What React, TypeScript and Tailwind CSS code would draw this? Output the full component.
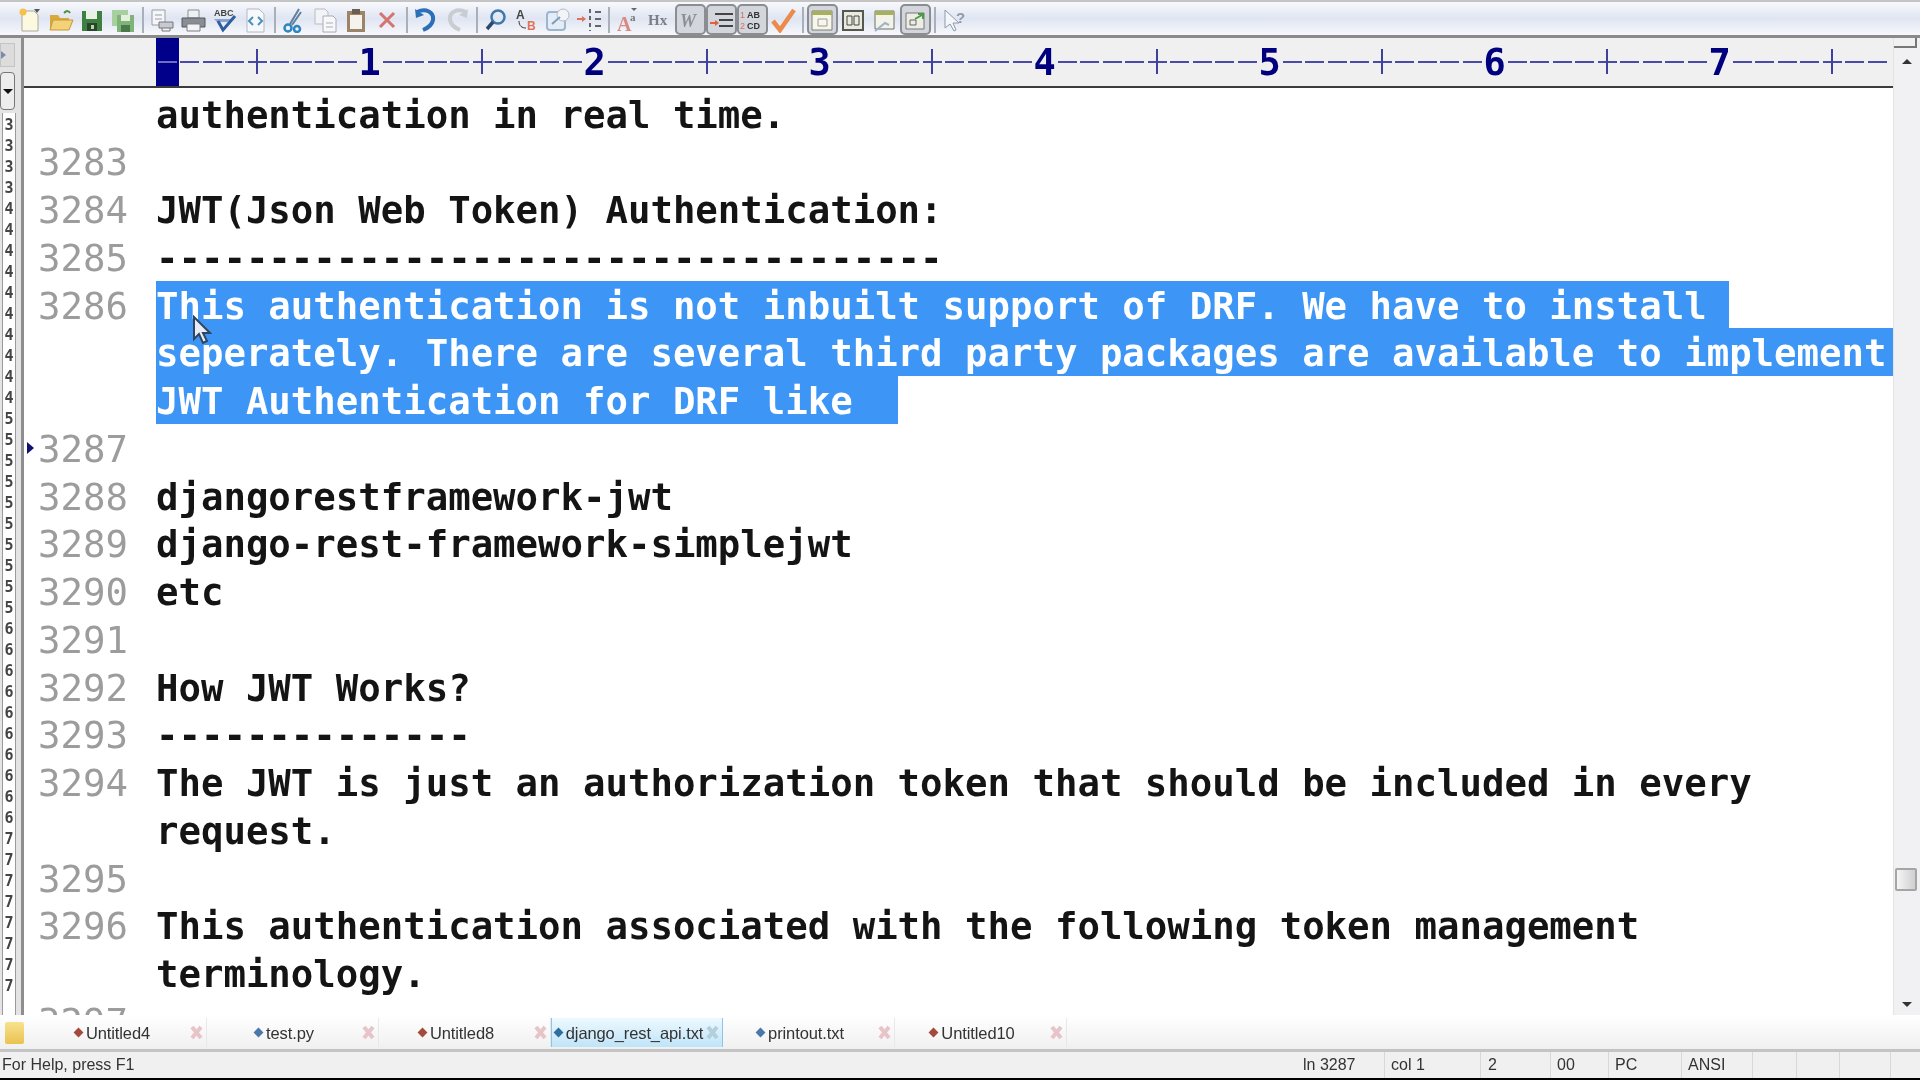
import type { ReactNode } from "react";

const Svg = ({ children }: { children: ReactNode }) => (
  <svg width="26" height="26" viewBox="0 0 26 26" fill="none">
    {children}
  </svg>
);

const icons: Record<string, ReactNode> = {
  new: (
    <Svg>
      <path d="M5 4h12l4 4v16H5z" fill="#fdf8e0" stroke="#a9a9a0" />
      <circle cx="6" cy="5" r="3.5" fill="#f6c04a" />
      <path d="M17 2h6l-3 4z" fill="#555" />
    </Svg>
  ),
  open: (
    <Svg>
      <path d="M2 8h8l2 3h9v12H2z" fill="#d9a93c" />
      <path d="M5 13h20l-4 10H2z" fill="#f3d27a" stroke="#c39a36" />
      <path d="M16 6c3-3 5-2 6 0" stroke="#4f8f3a" strokeWidth="2" />
    </Svg>
  ),
  save: (
    <Svg>
      <path d="M3 4h20v20H3z" fill="#3f8040" />
      <path d="M7 4h11v8H7z" fill="#e9f0e4" />
      <path d="M8 16h10v8H8z" fill="#26452a" />
      <path d="M12 18h3v4h-3z" fill="#b9d4a9" />
    </Svg>
  ),
  saveAll: (
    <Svg>
      <path d="M2 3h16v16H2z" fill="#a8cfa0" />
      <path d="M7 8h17v17H7z" fill="#7fb377" />
      <path d="M11 8h9v6h-9z" fill="#e3f0dd" />
      <path d="M11 18h9v7h-9z" fill="#4a7a4c" />
    </Svg>
  ),
  preview: (
    <Svg>
      <path d="M3 3h13v15H3z" fill="#f4f6fa" stroke="#9a9da6" />
      <path d="M6 8h7M6 12h7" stroke="#9a9da6" />
      <path d="M10 15h14v6H10z" fill="#c7cad2" stroke="#777" />
      <path d="M13 21v3h8v-3" stroke="#777" />
    </Svg>
  ),
  print: (
    <Svg>
      <path d="M8 3h11v8H8z" fill="#eef0f4" stroke="#8c8f96" />
      <path d="M2 11h23v9H2z" fill="#8a8d94" stroke="#55585e" />
      <path d="M7 17h13v7H7z" fill="#f3f4f6" stroke="#7b7e85" />
    </Svg>
  ),
  spell: (
    <Svg>
      <text x="3" y="9" fontSize="9" fontWeight="700" fontFamily="Liberation Sans, sans-serif" fill="#444">
        ABC
      </text>
      <path d="M3 12h20l-4 3H6z" fill="#88a5cf" />
      <path d="M7 14l5 9L24 9" stroke="#2f5f9e" strokeWidth="3" />
    </Svg>
  ),
  code: (
    <Svg>
      <path d="M5 2h12l5 5v18H5z" fill="#f6f8fb" stroke="#b3b8c2" />
      <path d="M11 10l-4 4 4 4M16 10l4 4-4 4" stroke="#4a90c2" strokeWidth="2" />
    </Svg>
  ),
  cut: (
    <Svg>
      <path d="M18 2L9 17M20 5L11 18" stroke="#5f7f9e" strokeWidth="2" />
      <circle cx="7" cy="21" r="3.5" stroke="#2e86c1" strokeWidth="2.5" />
      <circle cx="16" cy="22" r="3" stroke="#2e86c1" strokeWidth="2.5" />
    </Svg>
  ),
  copy: (
    <Svg>
      <path d="M3 2h10l3 3v12H3z" fill="#f2f3f6" stroke="#b9bcc4" />
      <path d="M11 9h10l3 3v13H11z" fill="#f7f8fa" stroke="#a9acb5" />
      <path d="M14 16h7M14 20h7" stroke="#a9acb5" />
    </Svg>
  ),
  paste: (
    <Svg>
      <path d="M4 4h18v21H4z" fill="#9b8468" />
      <path d="M7 8h12v14H7z" fill="#f5f3ee" />
      <path d="M9 2h8v5H9z" fill="#6b5f52" />
    </Svg>
  ),
  del: (
    <Svg>
      <path d="M6 6l14 14M20 6L6 20" stroke="#d5736f" strokeWidth="3" />
    </Svg>
  ),
  undo: (
    <Svg>
      <path d="M4 5c9-4 17 0 16 8-1 5-5 8-10 10" stroke="#2a6fb8" strokeWidth="4" />
      <path d="M2 2l1 9 8-3z" fill="#2a6fb8" />
    </Svg>
  ),
  redo: (
    <Svg>
      <path d="M22 5c-9-4-17 0-16 8 1 5 5 8 10 10" stroke="#c9ccd0" strokeWidth="4" />
      <path d="M24 2l-1 9-8-3z" fill="#c9ccd0" />
    </Svg>
  ),
  find: (
    <Svg>
      <circle cx="15" cy="10" r="6.5" stroke="#3f78ad" strokeWidth="2.5" />
      <path d="M10 15l-6 7" stroke="#2c4a68" strokeWidth="3.5" />
    </Svg>
  ),
  replace: (
    <Svg>
      <text x="2" y="12" fontSize="12" fontWeight="700" fontFamily="Liberation Sans, sans-serif" fill="#444">
        A
      </text>
      <text x="13" y="23" fontSize="12" fontWeight="700" fontFamily="Liberation Sans, sans-serif" fill="#e0705a">
        B
      </text>
      <path d="M5 14c0 5 3 7 7 7" stroke="#333" />
    </Svg>
  ),
  goTo: (
    <Svg>
      <rect x="2" y="5" width="18" height="18" rx="3" fill="#e4edf6" stroke="#9db6cf" strokeWidth="2" />
      <circle cx="18" cy="8" r="6" fill="#f2f4f7" stroke="#b4bcc6" />
      <path d="M7 17l8-7" stroke="#7b9cbd" strokeWidth="2" />
    </Svg>
  ),
  indentList: (
    <Svg>
      <path d="M1 12h7" stroke="#e0705a" strokeWidth="2" />
      <path d="M6 9l4 3-4 3z" fill="#e0705a" />
      <path d="M14 2v22" stroke="#666" strokeWidth="2" strokeDasharray="4 3" />
      <path d="M19 5h6M19 12h6M19 19h6" stroke="#666" strokeWidth="2" />
    </Svg>
  ),
  font: (
    <Svg>
      <text x="2" y="24" fontSize="20" fontWeight="700" fontFamily="Liberation Serif, serif" fill="#d98a82">
        A
      </text>
      <text x="15" y="14" fontSize="11" fontWeight="700" fontFamily="Liberation Serif, serif" fill="#777">
        a
      </text>
      <path d="M16 1h6l-3 3z" fill="#666" />
    </Svg>
  ),
  hx: (
    <Svg>
      <text x="2" y="18" fontSize="15" fontWeight="700" fontFamily="Liberation Serif, serif" fill="#7a7f88">
        Hx
      </text>
    </Svg>
  ),
  wrap: (
    <Svg>
      <text x="3" y="20" fontSize="18" fontStyle="italic" fontWeight="700" fontFamily="Liberation Serif, serif" fill="#8b8f96">
        W
      </text>
    </Svg>
  ),
  indent: (
    <Svg>
      <path d="M7 7h18M11 13h14M11 19h14" stroke="#444" strokeWidth="2" />
      <path d="M2 16h6" stroke="#e0603f" strokeWidth="2" />
      <path d="M7 13l4 3-4 3z" fill="#e0603f" />
    </Svg>
  ),
  numbers: (
    <Svg>
      <text x="1" y="11" fontSize="9" fontFamily="Liberation Sans, sans-serif" fill="#d9705a">
        1
      </text>
      <text x="1" y="22" fontSize="9" fontFamily="Liberation Sans, sans-serif" fill="#d9705a">
        2
      </text>
      <text x="8" y="11" fontSize="9" fontWeight="700" fontFamily="Liberation Sans, sans-serif" fill="#333">
        AB
      </text>
      <text x="8" y="22" fontSize="9" fontWeight="700" fontFamily="Liberation Sans, sans-serif" fill="#333">
        CD
      </text>
    </Svg>
  ),
  check: (
    <Svg>
      <path d="M3 14l7 9L24 3" stroke="#ea8a4c" strokeWidth="4.5" />
    </Svg>
  ),
  panelA: (
    <Svg>
      <path d="M3 4h20v19H3z" fill="#f7f6ea" stroke="#7d7f78" />
      <path d="M3 4h20v4H3z" fill="#a8b05c" />
      <path d="M9 12h9v7H9z" stroke="#9a9a9a" />
    </Svg>
  ),
  panelB: (
    <Svg>
      <path d="M3 4h20v19H3z" fill="#e9eadf" stroke="#56584f" strokeWidth="2" />
      <path d="M7 9h5v9H7zM14 9h5v9h-5z" stroke="#444" />
    </Svg>
  ),
  panelC: (
    <Svg>
      <path d="M4 4h19v18H4z" fill="#f3f3ea" stroke="#6f7168" />
      <path d="M4 4h19v4H4z" fill="#a8b05c" />
      <path d="M4 24l10-8 4 2" stroke="#9fb2c7" strokeWidth="2" />
    </Svg>
  ),
  panelD: (
    <Svg>
      <path d="M4 6h18v16H4z" fill="#eceee6" stroke="#777" />
      <path d="M8 18h6v-5H8z" stroke="#666" />
      <path d="M13 12l7-4M16 7h5v5" stroke="#4d9a45" strokeWidth="2" />
    </Svg>
  ),
  help: (
    <Svg>
      <path d="M4 3v18l5-4 4 7 2-1-3-7h6z" fill="#f4f6fa" stroke="#8e9aab" />
      <text x="15" y="16" fontSize="15" fontWeight="700" fontFamily="Liberation Sans, sans-serif" fill="#8e9aab">
        ?
      </text>
    </Svg>
  ),
};

const toolbar = [
  ["new", "open", "save", "saveAll"],
  ["preview", "print", "spell", "code"],
  ["cut", "copy", "paste", "del"],
  ["undo", "redo"],
  ["find", "replace", "goTo", "indentList"],
  ["font", "hx", "wrap", "indent", "numbers", "check"],
  ["panelA", "panelB", "panelC", "panelD"],
  ["help"],
];
const pressed = ["wrap", "indent", "numbers", "panelA", "panelD"];

function Toolbar() {
  return (
    <div className="h-[38px] pt-[2px] shrink-0 flex items-center bg-gradient-to-b from-[#f8f9fc] via-[#dfe5f2] to-[#f7f8fb] border-t-2 border-b-[3px] border-t-[#c4c4c4] border-b-[#8a8a8a] pl-[14.5px]">
      {toolbar.map((group, i) => (
        <div key={i} className="flex items-center">
          {i > 0 && (
            <div className="w-[8px] flex justify-center">
              <div className="w-[2px] h-[26px] bg-[#aab0ba]" />
            </div>
          )}
          {group.map((name) => (
            <div
              key={name}
              className={`w-[31px] h-[31px] flex items-center justify-center rounded-[5px] ${
                pressed.includes(name) ? "border-2 border-[#8a8d92] bg-[#d3d6dc]" : ""
              }`}
            >
              {icons[name]}
            </div>
          ))}
        </div>
      ))}
    </div>
  );
}

const rulerCells = Array.from({ length: 77 }, (_, i) => i);

function Ruler() {
  return (
    <div className="h-[50px] shrink-0 flex bg-[#f0f0f0] border-b-[2px] border-[#3c3c3c] pl-[132px] font-['DejaVu_Sans_Mono',monospace]">
      {rulerCells.map((i) => {
        const digit = i % 10 === 9;
        const tick = i % 10 === 4;
        return (
          <div
            key={i}
            className={`relative w-[22.5px] h-full shrink-0 flex items-center justify-center ${
              i === 0 ? "bg-[#00008b]" : ""
            }`}
          >
            {digit ? (
              <span className="mt-[2px] text-[37px] leading-[44px] font-bold text-[#00007f]">{(i + 1) / 10}</span>
            ) : (
              <div className={`h-[2px] w-[19px] ${i === 0 ? "bg-[#6f6fc0]" : "bg-[#4a4aa8]"}`} />
            )}
            {tick && <div className="absolute left-[10px] top-[11px] w-[2px] h-[25px] bg-[#3f3f9c]" />}
          </div>
        );
      })}
    </div>
  );
}

type Row = { n?: number; text?: string; sel?: boolean; mark?: boolean };

const rows: Row[] = [
  { text: "authentication in real time." },
  { n: 3283 },
  { n: 3284, text: "JWT(Json Web Token) Authentication:" },
  { n: 3285, text: "-----------------------------------" },
  { n: 3286, text: "This authentication is not inbuilt support of DRF. We have to install ", sel: true },
  { text: "seperately. There are several third party packages are available to implement ", sel: true },
  { text: "JWT Authentication for DRF like  ", sel: true },
  { n: 3287, mark: true },
  { n: 3288, text: "djangorestframework-jwt" },
  { n: 3289, text: "django-rest-framework-simplejwt" },
  { n: 3290, text: "etc" },
  { n: 3291 },
  { n: 3292, text: "How JWT Works?" },
  { n: 3293, text: "--------------" },
  { n: 3294, text: "The JWT is just an authorization token that should be included in every" },
  { text: "request." },
  { n: 3295 },
  { n: 3296, text: "This authentication associated with the following token management" },
  { text: "terminology." },
  { n: 3297 },
];

function Editor() {
  return (
    <div className="relative flex-1 min-h-0 min-w-0 overflow-hidden pt-[1.5px] bg-white font-['DejaVu_Sans_Mono',monospace] font-bold text-[37.35px] text-[#141414]">
      {rows.map((r, i) => (
        <div key={i} className="flex h-[47.76px] leading-[51.76px] whitespace-pre">
          <div className="w-[14px] shrink-0 flex items-center">
            {r.mark && (
              <div className="ml-[3px] w-0 h-0 border-y-[6px] border-y-transparent border-l-[7px] border-l-[#10106e]" />
            )}
          </div>
          <div className="w-[90px] shrink-0 text-right font-normal text-[#9c9c9c]">{r.n}</div>
          <div className="w-[28px] shrink-0" />
          {r.text && (
            <span className={r.sel ? "bg-[#3d96f5] text-white" : ""}>{r.text}</span>
          )}
        </div>
      ))}
      {/* mouse pointer over the selection */}
      <svg className="absolute left-[168px] top-[227px]" width="20" height="30" viewBox="0 0 20 30">
        <path d="M2 2v22l5-5 4 9 4-2-4-8h7z" fill="#e8edf4" stroke="#2f4660" strokeWidth="2" />
      </svg>
    </div>
  );
}

const bumps = [
  ..."3333",
  ..."4444444444",
  ..."5555555555",
  ..."6666666666",
  ..."77777777",
];

function LeftStrip() {
  return (
    <div className="w-[24px] shrink-0 flex flex-col bg-[#e4e4e4] border-r-[3px] border-[#8e8e8e] overflow-hidden">
      <div className="mt-[5px] h-[24px] w-[15px] shrink-0 bg-[#dcdcdc] border border-[#c4c4c4] flex items-center">
        <div className="w-0 h-0 border-y-[4px] border-y-transparent border-l-[5px] border-l-[#7a8aa8]" />
      </div>
      <div className="mt-[5px] h-[38px] w-[15px] shrink-0 bg-[#ededed] border border-[#777] rounded-[4px] flex items-center justify-center">
        <div className="w-0 h-0 border-x-[5px] border-x-transparent border-t-[5px] border-t-[#111]" />
      </div>
      <div className="mt-[3px] ml-[2px] w-[14px] flex-1 pt-[1.5px] border-x border-[#9a9a9a] bg-white font-['DejaVu_Sans_Mono',monospace] text-[15px] font-bold text-[#444] text-center">
        {bumps.map((b, i) => (
          <div key={i} className="h-[21px] leading-[21px]">
            {b}
          </div>
        ))}
      </div>
    </div>
  );
}

function Scrollbar() {
  return (
    <div className="w-[27px] shrink-0 flex flex-col items-center bg-[#f1f1f3] border-l border-[#e4e4e4]">
      <div className="h-[10px] w-[23px] mr-[3px] border-b-2 border-r-2 border-[#777]" />
      <div className="mt-[11px] w-0 h-0 border-x-[5px] border-x-transparent border-b-[5px] border-b-[#333]" />
      <div className="mt-[804px] h-[23px] w-[22px] -ml-[3px] rounded-[2px] bg-gradient-to-r from-[#f5f5f5] to-[#cfcfcf] border-2 border-[#a5a5a5]" />
      <div className="mt-[111px] w-0 h-0 border-x-[5px] border-x-transparent border-t-[5px] border-t-[#333]" />
    </div>
  );
}

const tabs = [
  { name: "Untitled4", dot: "bg-[#a34a3c]" },
  { name: "test.py", dot: "bg-[#4a78a8]" },
  { name: "Untitled8", dot: "bg-[#a34a3c]" },
  { name: "django_rest_api.txt", dot: "bg-[#2f6f9f]", active: true },
  { name: "printout.txt", dot: "bg-[#4a78a8]" },
  { name: "Untitled10", dot: "bg-[#a34a3c]" },
];

function TabBar() {
  return (
    <div className="h-[37px] shrink-0 flex pt-[3px] pb-[2px] bg-gradient-to-b from-white to-[#f0f0f0] border-b-[3px] border-[#c4c4c4] font-['Liberation_Sans',sans-serif] text-[16.5px] text-[#333]">
      <div className="w-[35px] shrink-0 flex items-center pl-[5px]">
        <div className="w-[19px] h-[22px] rounded-[2px] bg-gradient-to-b from-[#f8e28e] to-[#eac24e]" />
      </div>
      {tabs.map((t) => (
        <div
          key={t.name}
          className={`w-[172px] shrink-0 flex items-center pr-[2px] ${
            t.active
              ? "bg-gradient-to-b from-[#eef9ff] to-[#bfe4f8] border-x border-[#8fc5e4]"
              : "border-r border-[#e8e8e8]"
          }`}
        >
          <div className="flex-1 flex items-center justify-center gap-[4px] min-w-0">
            <div className={`w-[7px] h-[7px] shrink-0 rotate-45 ${t.dot}`} />
            <span className="mt-[1px] tracking-[-0.1px] whitespace-nowrap">{t.name}</span>
          </div>
          <svg className="shrink-0 mr-[1px]" width="13" height="15" viewBox="0 0 13 15">
            <path d="M2 2l9 11M11 2L2 13" stroke={t.active ? "#b4cfdc" : "#e6c4c8"} strokeWidth="4" />
          </svg>
        </div>
      ))}
    </div>
  );
}

const panes = [
  { text: "ln 3287", w: "w-[96px]" },
  { text: "col 1", w: "w-[96px]" },
  { text: "2", w: "w-[70px]" },
  { text: "00", w: "w-[58px]" },
  { text: "PC", w: "w-[73px]" },
  { text: "ANSI", w: "w-[71px]" },
  { text: "", w: "w-[44px]" },
  { text: "", w: "w-[43px]" },
  { text: "", w: "w-[51px]" },
];

function StatusBar() {
  return (
    <div className="h-[26px] shrink-0 flex items-center bg-[#f0f0f0] font-['Liberation_Sans',sans-serif] text-[16px] text-[#333]">
      <div className="w-[1289px] shrink-0 pl-[2px]">For Help, press F1</div>
      {panes.map((p, i) => (
        <div key={i} className={`${p.w} h-full shrink-0 pl-[6px] flex items-center border-r border-[#d8d8d8]`}>
          <span className={i === 0 ? "pl-[8px]" : i === 2 ? "pl-[1px]" : ""}>{p.text}</span>
        </div>
      ))}
    </div>
  );
}

export default function App() {
  return (
    <div className="w-[1920px] h-[1080px] flex flex-col overflow-hidden bg-black blur-[0.6px]">
      <Toolbar />
      <div className="flex-1 min-h-0 flex overflow-hidden bg-white">
        <LeftStrip />
        <div className="flex-1 min-w-0 min-h-0 flex flex-col">
          <Ruler />
          <Editor />
        </div>
        <Scrollbar />
      </div>
      <TabBar />
      <StatusBar />
      <div className="h-[2px] shrink-0 bg-black" />
    </div>
  );
}
